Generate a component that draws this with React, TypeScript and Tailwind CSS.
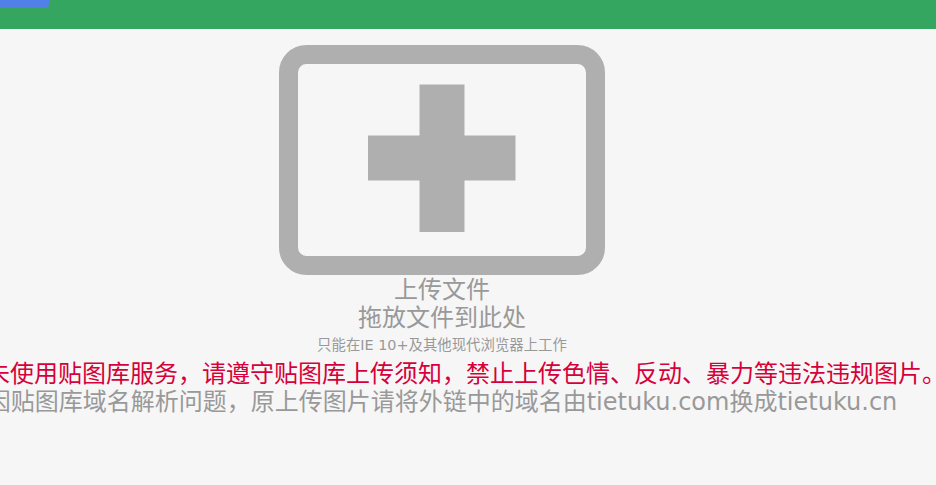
export default function App() {
  return (
    <div className="h-[485px] w-[936px] overflow-hidden bg-[#f6f6f6] font-['DejaVu_Sans','Noto_Sans_CJK_SC',sans-serif]">
      <header className="h-[29px] bg-[#34a65f]">
        <div className="h-2 w-[49px] rounded-br-sm bg-[#5080e8]" />
      </header>
      <main className="flex w-[884px] flex-col items-center pt-4 whitespace-nowrap">
        <svg width="326" height="230" viewBox="0 0 326 230" className="mb-px block shrink-0">
          <rect x="9.5" y="9.5" width="307" height="211" rx="18" fill="none" stroke="#afafaf" strokeWidth="19" />
          <path d="M140.5 39.5h45v51h51v45h-51v51.5h-45v-51.5h-51.5v-45h51.5z" fill="#afafaf" />
        </svg>
        <div className="text-2xl leading-7 text-[#999999]">上传文件</div>
        <div className="text-2xl leading-7 text-[#999999]">拖放文件到此处</div>
        <div className="text-[14.4px] leading-[27px] text-[#999999]">只能在IE 10+及其他现代浏览器上工作</div>
        <div className="text-2xl leading-[30px] text-[#d6003a]">若您未使用贴图库服务，请遵守贴图库上传须知，禁止上传色情、反动、暴力等违法违规图片。</div>
        <div className="text-2xl leading-[26px] text-[#999999]">因贴图库域名解析问题，原上传图片请将外链中的域名由tietuku.com换成tietuku.cn</div>
      </main>
    </div>
  );
}
